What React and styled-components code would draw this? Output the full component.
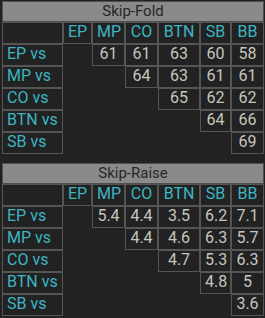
import styled, { createGlobalStyle } from "styled-components";

const positions = ["EP", "MP", "CO", "BTN", "SB", "BB"];

const skipFold = [
  ["EP", [null, 61, 61, 63, 60, 58]],
  ["MP", [null, null, 64, 63, 61, 61]],
  ["CO", [null, null, null, 65, 62, 62]],
  ["BTN", [null, null, null, null, 64, 66]],
  ["SB", [null, null, null, null, null, 69]],
];

const skipRaise = [
  ["EP", [null, "5.4", "4.4", "3.5", "6.2", "7.1"]],
  ["MP", [null, null, "4.4", "4.6", "6.3", "5.7"]],
  ["CO", [null, null, null, "4.7", "5.3", "6.3"]],
  ["BTN", [null, null, null, null, "4.8", "5"]],
  ["SB", [null, null, null, null, null, "3.6"]],
];

const GlobalStyle = createGlobalStyle`
  html, body {
    margin: 0;
    background: #222222;
  }
  body {
    font-family: Roboto, "Liberation Sans", sans-serif;
  }
`;

const Page = styled.div`
  display: flex;
  flex-direction: column;
  gap: 9px;
  padding: 1px 0 0 2px;
`;

const Grid = styled.div`
  display: grid;
  grid-template-columns: 61px 29px 33px 33px 42px 31px 33px;
  width: 262px;
`;

const Title = styled.div`
  grid-column: 1 / -1;
  box-sizing: border-box;
  height: 21px;
  border: 1px solid #4e4e4e;
  background: #8a8a8a;
  color: #262626;
  font-size: 15px;
  line-height: 19px;
  text-align: center;
`;

const Cell = styled.div`
  box-sizing: border-box;
  height: 22px;
  border: 1px solid ${(p) => (p.$empty ? "transparent" : "#555555")};
  padding: 0 4px 3px;
  font-size: 16px;
  line-height: 17px;
  white-space: nowrap;
  text-align: ${(p) => (p.$left ? "left" : "center")};
  color: ${(p) => (p.$value ? "#c6c6be" : "#3cb6c2")};
`;

function Chart({ title, rows }) {
  return (
    <Grid>
      <Title>{title}</Title>
      <Cell />
      {positions.map((p) => (
        <Cell key={p}>{p}</Cell>
      ))}
      {rows.map(([name, values]) => [
        <Cell key={name} $left>
          {name} vs
        </Cell>,
        ...values.map((v, i) =>
          v === null ? (
            <Cell key={name + i} $empty />
          ) : (
            <Cell key={name + i} $value>
              {v}
            </Cell>
          )
        ),
      ])}
    </Grid>
  );
}

export default function App() {
  return (
    <>
      <GlobalStyle />
      <Page>
        <Chart title="Skip-Fold" rows={skipFold} />
        <Chart title="Skip-Raise" rows={skipRaise} />
      </Page>
    </>
  );
}
